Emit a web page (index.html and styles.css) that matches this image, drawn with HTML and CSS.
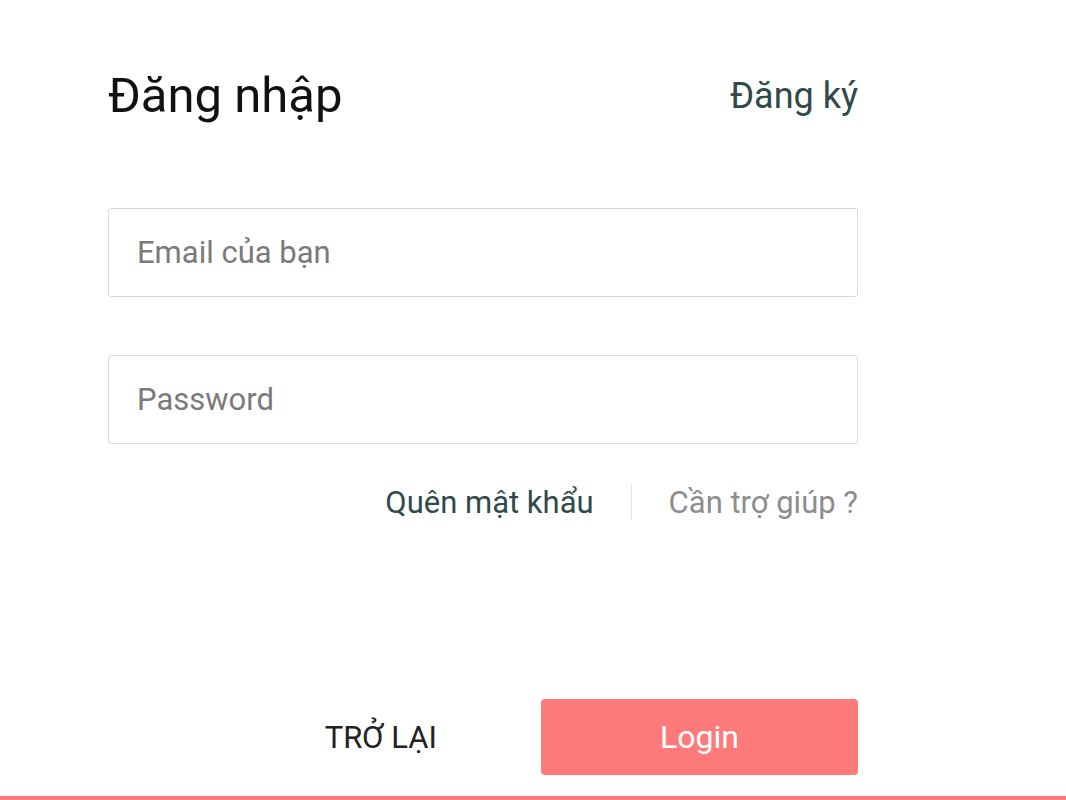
FILE: index.html
```html
<!DOCTYPE html>
<html lang="vi">
<head>
<meta charset="utf-8">
<title>Đăng nhập</title>
<link rel="stylesheet" href="styles.css">
</head>
<body>
<div class="page">
  <main class="card">
    <header class="head">
      <h1 class="title">Đăng nhập</h1>
      <a class="signup" href="#">Đăng ký</a>
    </header>
    <form class="form">
      <input class="field" type="text" placeholder="Email của bạn">
      <input class="field" type="password" placeholder="Password">
      <div class="links">
        <a class="forgot" href="#">Quên mật khẩu</a>
        <span class="sep"></span>
        <a class="help" href="#">Cần trợ giúp ?</a>
      </div>
      <div class="actions">
        <button type="button" class="back">TRỞ LẠI</button>
        <button type="button" class="login">Login</button>
      </div>
    </form>
  </main>
  <div class="bottom-line"></div>
</div>
</body>
</html>
```
FILE: styles.css
```css
* { box-sizing: border-box; }
html, body { margin: 0; padding: 0; background: #fff; }
body { font-family: Roboto, "Noto Sans", sans-serif; }
.page { width: 1066px; height: 800px; display: flex; flex-direction: column; overflow: hidden; }
.card { flex: 1; padding: 68px 0 0 108px; }
.head { display: flex; justify-content: space-between; align-items: center; height: 56px; width: 750px; }
.title { margin: 0; font-size: 49px; font-weight: 400; color: #111; line-height: 56px; }
.signup { font-size: 36px; color: #2e4a4b; text-decoration: none; line-height: 56px; }
.form { display: flex; flex-direction: column; margin-top: 84px; width: 750px; }
.field { width: 750px; height: 89px; border: 1px solid #dcdcdc; border-radius: 3px; padding: 0 28px; font-family: inherit; font-size: 31px; color: #333; outline: none; margin-bottom: 58px; }
.field:last-of-type { margin-bottom: 0; }
.field::placeholder { color: #7a7a7a; }
.links { display: flex; justify-content: flex-end; align-items: center; margin-top: 40px; height: 36px; }
.forgot { font-size: 31px; color: #2f4a4b; text-decoration: none; }
.sep { width: 1px; height: 35px; background: #e0e0e0; margin: 0 37px; }
.help { font-size: 31px; color: #8d8d8d; text-decoration: none; }
.actions { display: flex; justify-content: flex-end; align-items: center; margin-top: 179px; }
.back { background: none; border: none; font-family: inherit; font-size: 31px; color: #222; padding: 0; margin-right: 104px; }
.login { width: 317px; height: 76px; background: #ff7b7b; border: none; border-radius: 4px; color: #fff; font-family: inherit; font-size: 32px; font-weight: 400; }
.bottom-line { height: 4px; background: #ff7b7b; width: 100%; }
```
